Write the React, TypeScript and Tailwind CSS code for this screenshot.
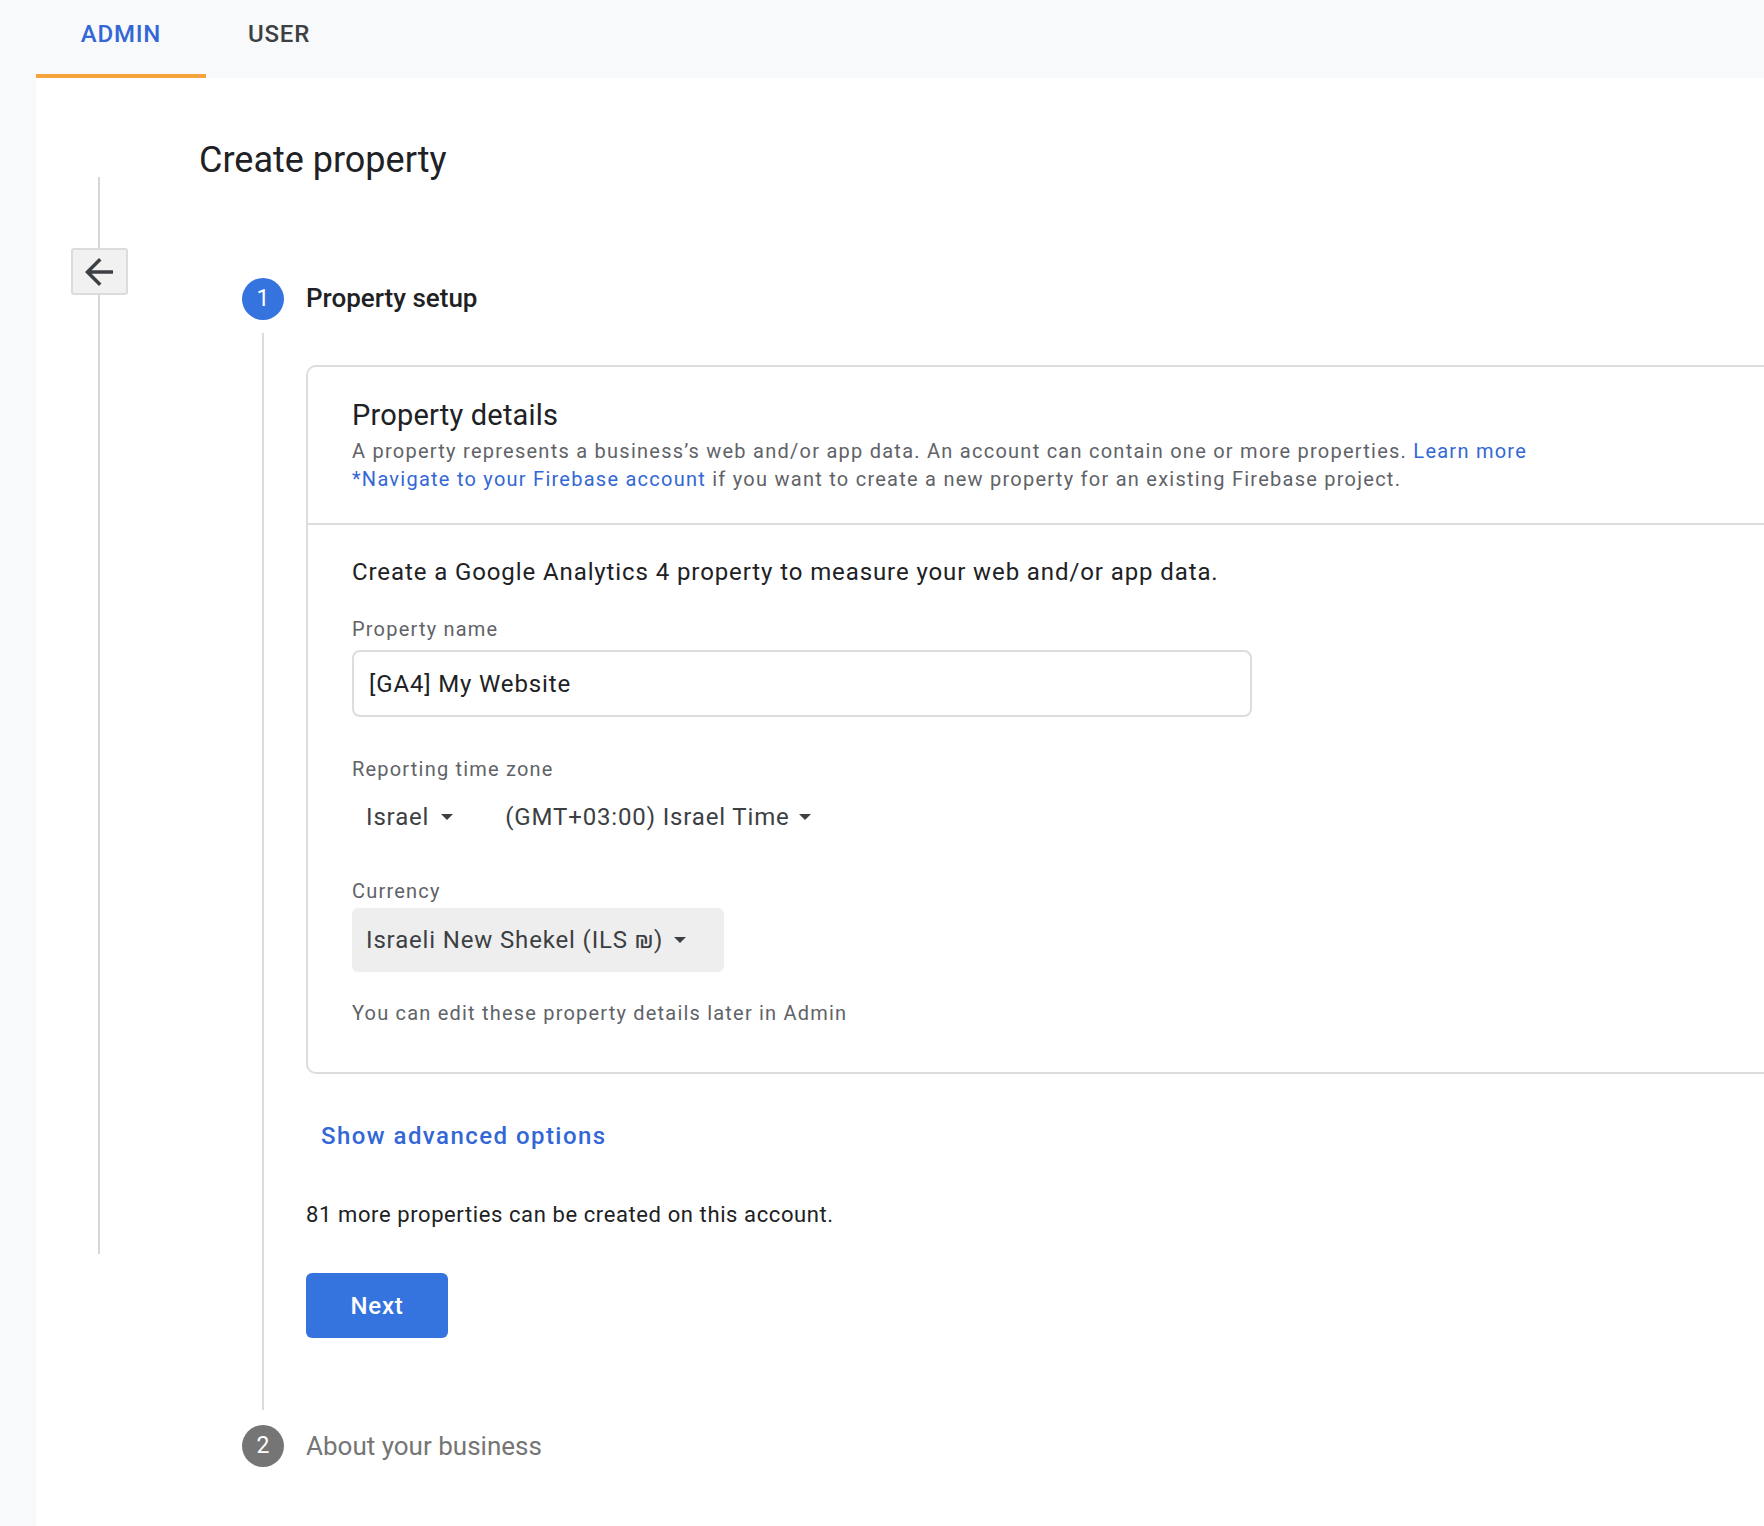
import React from "react";

function Caret() {
  return (
    <svg width="12" height="6" viewBox="0 0 12 6" className="shrink-0">
      <path d="M0 0L6 6L12 0Z" fill="#3c4043" />
    </svg>
  );
}

export default function App() {
  return (
    <div className="min-h-[1526px] w-full overflow-hidden bg-[#f8f9fa] font-[Roboto,'Noto_Sans',sans-serif] text-[#202124]">
      {/* Tabs header */}
      <div className="flex h-[78px] pl-[36px]">
        <div className="box-border flex h-[78px] w-[170px] justify-center border-b-4 border-[#f4a33d] pt-[18px]">
          <span className="text-[24px] leading-[32px] font-medium tracking-[0.8px] text-[#3367d6]">ADMIN</span>
        </div>
        <div className="flex h-[78px] w-[146px] justify-center pt-[18px]">
          <span className="text-[24px] leading-[32px] font-medium tracking-[0.8px] text-[#3c4043]">USER</span>
        </div>
      </div>

      {/* Content */}
      <div className="ml-[36px] flex min-h-[1448px] bg-white">
        {/* Left rail */}
        <div className="flex w-[126px] shrink-0 flex-col items-center pt-[99px]">
          <div className="h-[71px] w-[2px] bg-[#d6d6d6]" />
          <button className="box-border flex h-[47px] w-[57px] items-center justify-center rounded-[3px] border-2 border-[#dcdcdc] bg-[#f1f1f1]">
            <svg width="42" height="42" viewBox="0 0 24 24">
              <path d="M20 11H7.83l5.59-5.59L12 4l-8 8 8 8 1.41-1.41L7.83 13H20v-2z" fill="#3c4043" />
            </svg>
          </button>
          <div className="h-[959px] w-[2px] bg-[#d6d6d6]" />
        </div>

        {/* Main column */}
        <div className="flex-1 pl-[37px] pt-[60px]">
          <h1 className="text-[36px] leading-[44px] font-normal text-[#202124]">Create property</h1>

          <div className="ml-[43px] mt-[96px]">
            {/* Step 1 */}
            <div className="flex gap-[22px]">
              <div className="flex w-[42px] shrink-0 flex-col items-center">
                <div className="flex h-[42px] w-[42px] items-center justify-center rounded-full bg-[#3574df] text-[23px] text-white">1</div>
                <div className="mb-[15px] mt-[13px] w-[2px] flex-1 bg-[#dcdcdc]" />
              </div>
              <div className="flex-1 pb-[87px]">
                <div className="flex h-[40px] items-center text-[26px] font-medium text-[#202124]">Property setup</div>

                {/* Card */}
                <div className="mt-[47px] box-border w-[1500px] rounded-[10px] border-2 border-[#dddddd]">
                  <div className="border-b-2 border-[#dddddd] pb-[30px] pl-[44px] pt-[30px]">
                    <div className="text-[29px] leading-[36px] tracking-[0.2px] text-[#202124]">Property details</div>
                    <div className="mt-[4px] text-[20px] leading-[28px] tracking-[1.25px] text-[#5f6368]">
                      <div>
                        A property represents a business’s web and/or app data. An account can contain one or more properties.{" "}
                        <span className="text-[#3367d6]">Learn more</span>
                      </div>
                      <div>
                        <span className="text-[#3367d6]">*Navigate to your Firebase account</span> if you want to create a new property for an existing Firebase project.
                      </div>
                    </div>
                  </div>

                  <div className="pb-[45px] pl-[44px] pt-[31px]">
                    <div className="text-[24px] leading-[32px] tracking-[0.9px] text-[#202124]">
                      Create a Google Analytics 4 property to measure your web and/or app data.
                    </div>

                    <div className="mt-[27px] text-[20px] leading-[28px] tracking-[1.2px] text-[#5f6368]">Property name</div>
                    <div className="mt-[7px] box-border flex h-[67px] w-[900px] items-center rounded-[8px] border-2 border-[#dddddd] pl-[15px] text-[24px] tracking-[0.85px] text-[#202124]">
                      [GA4] My Website
                    </div>

                    <div className="mt-[38px] text-[20px] leading-[28px] tracking-[1.2px] text-[#5f6368]">Reporting time zone</div>
                    <div className="mt-[6px] flex h-[56px] items-center gap-[24px]">
                      <div className="flex h-[56px] items-center gap-[12px] px-[14px] text-[24px] tracking-[0.85px] text-[#3c4043]">
                        <span>Israel</span>
                        <Caret />
                      </div>
                      <div className="flex h-[56px] items-center gap-[9px] px-[14px] text-[24px] tracking-[0.85px] text-[#3c4043]">
                        <span>(GMT+03:00) Israel Time</span>
                        <Caret />
                      </div>
                    </div>

                    <div className="mt-[32px] text-[20px] leading-[28px] tracking-[1.2px] text-[#5f6368]">Currency</div>
                    <div className="mt-[3px] flex h-[64px] w-[372px] items-center gap-[11px] rounded-[6px] bg-[#eeeeee] px-[14px] text-[24px] tracking-[0.85px] text-[#3c4043]">
                      <span>Israeli New Shekel (ILS ₪)</span>
                      <Caret />
                    </div>

                    <div className="mt-[27px] text-[20px] leading-[28px] tracking-[1.2px] text-[#5f6368]">
                      You can edit these property details later in Admin
                    </div>
                  </div>
                </div>

                <div className="ml-[15px] mt-[46px] text-[24px] leading-[32px] font-medium tracking-[1.45px] text-[#3367d6]">
                  Show advanced options
                </div>

                <div className="mt-[48px] text-[22px] leading-[30px] tracking-[0.6px] text-[#202124]">
                  81 more properties can be created on this account.
                </div>

                <button className="mt-[43px] flex h-[65px] w-[142px] items-center justify-center rounded-[6px] bg-[#3574df] text-[24px] font-medium tracking-[0.8px] text-white">
                  Next
                </button>
              </div>
            </div>

            {/* Step 2 */}
            <div className="flex items-center gap-[22px]">
              <div className="flex h-[42px] w-[42px] shrink-0 items-center justify-center rounded-full bg-[#757575] text-[23px] text-white">2</div>
              <div className="text-[26px] text-[#757575]">About your business</div>
            </div>
          </div>
        </div>
      </div>
    </div>
  );
}
